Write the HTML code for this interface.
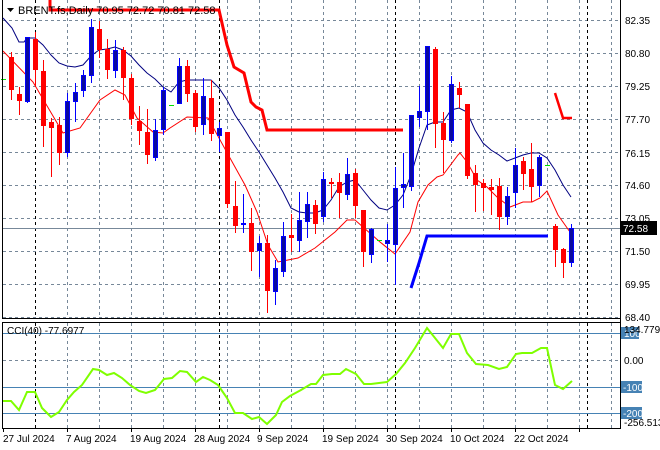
<!DOCTYPE html>
<html><head><meta charset="utf-8"><style>
html,body{margin:0;padding:0;background:#fff;}
svg{display:block;font-family:"Liberation Sans",sans-serif;}
</style></head><body>
<svg width="660" height="450" viewBox="0 0 660 450" xmlns="http://www.w3.org/2000/svg">
<rect width="660" height="450" fill="#fff"/>
<!-- grid main -->
<g stroke="#778899" stroke-width="1" stroke-dasharray="3,3" fill="none">
<path d="M3 20.5H620M3 53.5H620M3 86.5H620M3 119.5H620M3 152.5H620M3 185.5H620M3 218.5H620M3 251.5H620M3 284.5H620M3 317.5H620"/>
<path d="M67.5 0V318M99.5 0V318M131.5 0V318M163.5 0V318M195.5 0V318M227.5 0V318M259.5 0V318M291.5 0V318M323.5 0V318M355.5 0V318M387.5 0V318M419.5 0V318M451.5 0V318M483.5 0V318M515.5 0V318M547.5 0V318M579.5 0V318M611.5 0V318"/>
<path d="M67.5 323V428M99.5 323V428M131.5 323V428M163.5 323V428M195.5 323V428M227.5 323V428M259.5 323V428M291.5 323V428M323.5 323V428M355.5 323V428M387.5 323V428M419.5 323V428M451.5 323V428M483.5 323V428M515.5 323V428M547.5 323V428M579.5 323V428M611.5 323V428"/>
<path d="M3 360.5H620"/>
</g>
<g stroke="#000" stroke-width="1" stroke-dasharray="3,3">
<path d="M35.5 0V318M219.5 0V318M395.5 0V318M587.5 0V318M35.5 323V428M219.5 323V428M395.5 323V428M587.5 323V428"/>
</g>
<!-- price line -->
<path d="M3 228.5H620" stroke="#778899" stroke-width="1"/>
<!-- MAs -->
<polyline fill="none" stroke="#000080" stroke-width="1" points="3,18 12,28 19,42 24,42 27,38 35,38 43,45 51,55 59,63 67,66 75,67 83,65 91,56 99,50 107,49 115,47 123,50 131,56 139,65 147,73 155,79 163,87 171,92 179,82 187,80 195,80 211,80 219,88 227,100 235,115 243,127 251,140 259,152 267,165 275,178 283,192 291,208 299,212 307,213 315,213 323,210 331,200 339,187 347,182 355,180 363,190 371,200 379,208 387,210 395,205 403,195 411,175 419,148 427,125 435,122 443,122 451,110 459,108 467,112 475,130 483,143 491,150 499,155 507,161 515,158 523,155 531,153 539,153 547,158 555,170 563,185 571,197"/>
<polyline fill="none" stroke="#ff0000" stroke-width="1" points="3,51 33,82 63,133 80,128 100,100 115,90 125,95 137,118 153,132 163,133 170,128 187,117 208,118 230,158 245,185 257,212 268,245 278,262 298,258 315,248 335,232 347,220 355,220 380,242 395,254 410,232 418,202 428,185 437,177 443,175 458,155 460,153 467,162 477,180 487,187 497,197 510,207 523,202 532,202 540,198 547,191 558,215 570,232"/>
<!-- stops -->
<polyline fill="none" stroke="#ff0000" stroke-width="3" points="50,0 50,10 219,10 227,45 234,67 244,73 251,102 256,107 262,110 267,130 403,130"/>
<polyline fill="none" stroke="#ff0000" stroke-width="2.5" points="555,93 563,118 572,118"/>
<polyline fill="none" stroke="#0000ff" stroke-width="3" points="411,288 419,263 427,236 548,236"/>
<!-- candles red -->
<g fill="#ff0000">
<rect x="11" y="52" width="1" height="48"/><rect x="9" y="57" width="5" height="33"/>
<rect x="19" y="87" width="1" height="28"/><rect x="17" y="94" width="5" height="7"/>
<rect x="35" y="32" width="1" height="55"/><rect x="33" y="39" width="5" height="31"/>
<rect x="43" y="60" width="1" height="87"/><rect x="41" y="71" width="5" height="55"/>
<rect x="51" y="118" width="1" height="59"/><rect x="49" y="122" width="5" height="6"/>
<rect x="59" y="117" width="1" height="48"/><rect x="57" y="125" width="5" height="28"/>
<rect x="99" y="21" width="1" height="37"/><rect x="97" y="29" width="5" height="21"/>
<rect x="107" y="39" width="1" height="40"/><rect x="105" y="49" width="5" height="21"/>
<rect x="123" y="47" width="1" height="53"/><rect x="121" y="50" width="5" height="28"/>
<rect x="131" y="74" width="1" height="51"/><rect x="129" y="78" width="5" height="41"/>
<rect x="139" y="106" width="1" height="39"/><rect x="137" y="121" width="5" height="10"/>
<rect x="147" y="109" width="1" height="55"/><rect x="145" y="132" width="5" height="23"/>
<rect x="187" y="60" width="1" height="42"/><rect x="185" y="66" width="5" height="28"/>
<rect x="195" y="90" width="1" height="42"/><rect x="193" y="93" width="5" height="34"/>
<rect x="211" y="80" width="1" height="61"/><rect x="209" y="98" width="5" height="36"/>
<rect x="227" y="132" width="1" height="76"/><rect x="225" y="132" width="5" height="72"/>
<rect x="235" y="181" width="1" height="52"/><rect x="233" y="206" width="5" height="20"/>
<rect x="251" y="208" width="1" height="63"/><rect x="249" y="223" width="5" height="29"/>
<rect x="267" y="235" width="1" height="78"/><rect x="265" y="243" width="5" height="48"/>
<rect x="291" y="214" width="1" height="38"/><rect x="289" y="235" width="5" height="3"/>
<rect x="315" y="200" width="1" height="34"/><rect x="313" y="205" width="5" height="19"/>
<rect x="331" y="178" width="1" height="20"/><rect x="329" y="182" width="5" height="2"/>
<rect x="339" y="173" width="1" height="45"/><rect x="337" y="182" width="5" height="11"/>
<rect x="355" y="169" width="1" height="49"/><rect x="353" y="173" width="5" height="33"/>
<rect x="363" y="210" width="1" height="57"/><rect x="361" y="210" width="5" height="42"/>
<rect x="435" y="47" width="1" height="101"/><rect x="433" y="49" width="5" height="75"/>
<rect x="443" y="112" width="1" height="61"/><rect x="441" y="123" width="5" height="17"/>
<rect x="459" y="82" width="1" height="26"/><rect x="457" y="88" width="5" height="7"/>
<rect x="467" y="104" width="1" height="75"/><rect x="465" y="104" width="5" height="72"/>
<rect x="475" y="165" width="1" height="47"/><rect x="473" y="173" width="5" height="12"/>
<rect x="483" y="179" width="1" height="32"/><rect x="481" y="183" width="5" height="5"/>
<rect x="491" y="179" width="1" height="36"/><rect x="489" y="187" width="5" height="3"/>
<rect x="499" y="178" width="1" height="52"/><rect x="497" y="186" width="5" height="31"/>
<rect x="523" y="157" width="1" height="33"/><rect x="521" y="161" width="5" height="13"/>
<rect x="531" y="143" width="1" height="59"/><rect x="529" y="169" width="5" height="18"/>
<rect x="555" y="224" width="1" height="43"/><rect x="553" y="226" width="5" height="24"/>
<rect x="563" y="248" width="1" height="30"/><rect x="561" y="249" width="5" height="14"/>
</g>
<!-- candles blue -->
<g fill="#0000ff">
<rect x="27" y="37" width="1" height="66"/><rect x="67" y="93" width="1" height="64"/><rect x="75" y="83" width="1" height="39"/><rect x="83" y="70" width="1" height="27"/><rect x="91" y="19" width="1" height="64"/><rect x="115" y="40" width="1" height="38"/><rect x="155" y="119" width="1" height="42"/><rect x="163" y="87" width="1" height="48"/><rect x="179" y="58" width="1" height="46"/><rect x="203" y="78" width="1" height="57"/><rect x="219" y="122" width="1" height="30"/><rect x="243" y="194" width="1" height="39"/><rect x="259" y="236" width="1" height="41"/><rect x="275" y="260" width="1" height="45"/><rect x="283" y="222" width="1" height="55"/><rect x="299" y="192" width="1" height="60"/><rect x="307" y="192" width="1" height="46"/><rect x="323" y="172" width="1" height="50"/><rect x="347" y="158" width="1" height="42"/><rect x="371" y="228" width="1" height="35"/><rect x="387" y="224" width="1" height="38"/><rect x="395" y="167" width="1" height="118"/><rect x="403" y="153" width="1" height="55"/><rect x="411" y="115" width="1" height="76"/><rect x="419" y="86" width="1" height="41"/><rect x="427" y="46" width="1" height="84"/><rect x="451" y="76" width="1" height="67"/><rect x="507" y="187" width="1" height="38"/><rect x="515" y="148" width="1" height="60"/><rect x="539" y="155" width="1" height="42"/><rect x="571" y="224" width="1" height="43"/>
</g>
<g fill="#0a0a9e" stroke="#0000ff" stroke-width="1">
<rect x="25.5" y="37.5" width="4" height="64"/><rect x="65.5" y="101.5" width="4" height="51"/><rect x="73.5" y="92.5" width="4" height="9"/><rect x="81.5" y="75.5" width="4" height="15"/><rect x="89.5" y="27.5" width="4" height="48"/><rect x="113.5" y="50.5" width="4" height="20"/><rect x="153.5" y="130.5" width="4" height="27"/><rect x="161.5" y="90.5" width="4" height="39"/><rect x="177.5" y="66.5" width="4" height="37"/><rect x="201.5" y="96.5" width="4" height="28"/><rect x="217.5" y="128.5" width="4" height="7"/><rect x="241.5" y="223.5" width="4" height="1"/><rect x="257.5" y="243.5" width="4" height="7"/><rect x="273.5" y="268.5" width="4" height="23"/><rect x="281.5" y="236.5" width="4" height="35"/><rect x="297.5" y="220.5" width="4" height="20"/><rect x="305.5" y="204.5" width="4" height="17"/><rect x="321.5" y="179.5" width="4" height="37"/><rect x="345.5" y="174.5" width="4" height="20"/><rect x="369.5" y="229.5" width="4" height="25"/><rect x="385.5" y="240.5" width="4" height="3"/><rect x="393.5" y="188.5" width="4" height="56"/><rect x="401.5" y="184.5" width="4" height="3"/><rect x="409.5" y="115.5" width="4" height="71"/><rect x="417.5" y="111.5" width="4" height="6"/><rect x="425.5" y="46.5" width="4" height="65"/><rect x="449.5" y="84.5" width="4" height="56"/><rect x="505.5" y="196.5" width="4" height="20"/><rect x="513.5" y="165.5" width="4" height="27"/><rect x="537.5" y="157.5" width="4" height="28"/><rect x="569.5" y="228.5" width="4" height="34"/>
</g>
<g fill="#00e000"><rect x="1" y="79" width="5" height="1"/><rect x="169" y="105" width="5" height="1"/><rect x="377" y="240" width="5" height="1"/><rect x="545" y="165" width="5" height="1"/></g>
<!-- frames -->
<path d="M2.5 0V319M2 318.5H620M620.5 0V429M2.5 322V429M2 322.5H620M2 428.5H620" stroke="#000" stroke-width="1" fill="none"/>
<!-- header -->
<path d="M7 8h7l-3.5 4z" fill="#000"/>
<text x="18" y="14" font-size="11" fill="#000">BRENT.fs,Daily  70.95 72.72 70.81 72.58</text>
<!-- price axis labels -->
<g font-size="10" fill="#000">
<text x="625" y="24">82.35</text><text x="625" y="57">80.80</text><text x="625" y="90">79.25</text><text x="625" y="123">77.70</text><text x="625" y="157">76.15</text><text x="625" y="189">74.60</text><text x="625" y="222">73.05</text><text x="625" y="255">71.50</text><text x="625" y="288">69.95</text><text x="625" y="321">68.40</text>
</g>
<rect x="621" y="221" width="36" height="14" fill="#000"/>
<text x="623" y="232" font-size="10" fill="#fff">72.58</text>
<!-- CCI -->
<path d="M3 333.5H620M3 387.5H620M3 413.5H620" stroke="#4682b4" stroke-width="1"/>
<polyline fill="none" stroke="#7fff00" stroke-width="2" points="3,401 11,401 19,410 27,392 35,392 42,408 51,417 59,412 67,400 74,392 82,385 93,369 99,370 107,375 114,373 122,378 130,385 139,391 146,393 155,390 164,379 172,378 180,371 187,372 196,382 203,377 210,380 218,385 227,398 235,413 243,413 252,419 259,417 267,424 276,415 282,402 290,396 301,390 311,384 316,384 323,375 332,374 340,374 346,369 356,374 364,384 371,384 379,383 387,382 396,374 405,363 415,348 427,328 443,348 451,334 459,334 467,353 476,364 488,365 499,369 507,367 516,354 522,353 532,353 541,348 547,348 555,385 563,389 572,381"/>
<text x="7" y="334" font-size="10" fill="#000">CCI(40) -77.6977</text>
<g font-size="10">
<rect x="621" y="327" width="18" height="12" fill="#4682b4"/>
<text x="624" y="337" fill="#fff">100</text>
<text x="624" y="333" fill="#000">134.779</text>
<text x="624" y="364" fill="#000">0.00</text>
<rect x="621" y="381" width="21" height="12" fill="#4682b4"/>
<text x="623" y="391" fill="#fff">-100</text>
<rect x="621" y="407" width="21" height="12" fill="#4682b4"/>
<text x="623" y="417" fill="#fff">-200</text>
<text x="624" y="426" fill="#000">-256.513</text>
</g>
<!-- dates -->
<g font-size="10" fill="#000">
<text x="3" y="442">27 Jul 2024</text><text x="66" y="442">7 Aug 2024</text><text x="130" y="442">19 Aug 2024</text><text x="194" y="442">28 Aug 2024</text><text x="257" y="442">9 Sep 2024</text><text x="322" y="442">19 Sep 2024</text><text x="386" y="442">30 Sep 2024</text><text x="450" y="442">10 Oct 2024</text><text x="514" y="442">22 Oct 2024</text>
</g>
<path d="M3.5 429v3M67.5 429v3M131.5 429v3M195.5 429v3M259.5 429v3M323.5 429v3M387.5 429v3M451.5 429v3M515.5 429v3M579.5 429v3" stroke="#000"/>
</svg>
</body></html>
